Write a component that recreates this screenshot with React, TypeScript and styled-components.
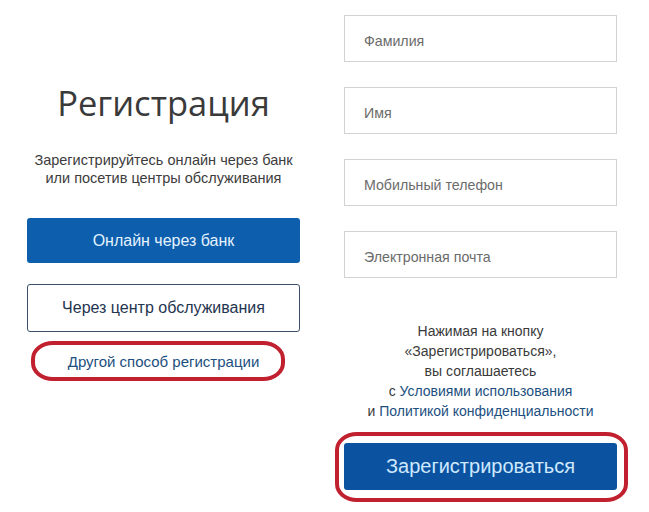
import styled, { createGlobalStyle } from 'styled-components';

const GlobalStyle = createGlobalStyle`
	html, body {
		margin: 0;
		padding: 0;
		background: #fff;
	}
	body {
		font-family: 'Liberation Sans', Arial, sans-serif;
		color: #333;
	}
`;

const Page = styled.div`
	display: flex;
	align-items: flex-start;
	gap: 44px;
	padding: 15px 0 0 27px;
	width: 649px;
	height: 512px;
	box-sizing: border-box;
`;

const Column = styled.div`
	width: 273px;
	display: flex;
	flex-direction: column;
	align-items: center;
`;

const Title = styled.h1`
	margin: 65px 0 0;
	font-family: 'Open Sans', sans-serif;
	font-weight: 400;
	font-size: 34.5px;
	line-height: 46px;
	color: #3a3a3a;
`;

const Lead = styled.p`
	margin: 25px 0 0;
	font-size: 14.5px;
	line-height: 18px;
	text-align: center;
	color: #3c3c3c;
`;

const Button = styled.button<{ $outline?: boolean; $big?: boolean }>`
	width: 273px;
	height: ${(p) => (p.$big ? '47px' : p.$outline ? '48px' : '45px')};
	border-radius: 3px;
	border: 1px solid ${(p) => (p.$outline ? '#3b5068' : 'transparent')};
	background: ${(p) => (p.$outline ? '#fff' : p.$big ? '#0b53a0' : '#0d5ead')};
	color: ${(p) => (p.$outline ? '#1f3550' : p.$big ? '#cfe9ff' : '#e4f2ff')};
	font-family: 'Liberation Sans', Arial, sans-serif;
	font-size: ${(p) => (p.$big ? '20px' : '16px')};
	cursor: pointer;
	padding: 0;
`;

const BankButton = styled(Button)`
	margin-top: 31px;
`;

const CenterButton = styled(Button)`
	margin-top: 21px;
`;

const Marked = styled.div<{ $w: number; $h: number; $dx: number; $dy: number }>`
	position: relative;

	&::after {
		content: '';
		position: absolute;
		left: ${(p) => p.$dx}px;
		top: ${(p) => p.$dy}px;
		width: ${(p) => p.$w}px;
		height: ${(p) => p.$h}px;
		border: 4px solid #c1202e;
		border-radius: 22px / 18px;
		box-sizing: border-box;
		pointer-events: none;
	}
`;

const OtherWay = styled(Marked)`
	margin-top: 21px;
`;

const Link = styled.a<{ $size?: number }>`
	color: #1d4f80;
	text-decoration: none;
	font-size: ${(p) => p.$size ?? 14}px;
	line-height: 18px;
`;

const Field = styled.input`
	width: 273px;
	height: 47px;
	box-sizing: border-box;
	border: 1px solid #d2d2d2;
	padding: 4px 19px 0;
	margin-bottom: 25px;
	font-family: 'Liberation Sans', Arial, sans-serif;
	font-size: 14.2px;
	color: #333;
	outline: none;

	&::placeholder {
		color: #6b6b6b;
	}
`;

const Agreement = styled.p`
	margin: 18px 0 0;
	font-size: 14px;
	line-height: 20px;
	text-align: center;
	color: #3a3a3a;
`;

const Register = styled(Marked)`
	margin-top: 22px;
`;

const App = () => {
	return (
		<>
			<GlobalStyle />
			<Page>
				<Column>
					<Title>Регистрация</Title>
					<Lead>
						Зарегистрируйтесь онлайн через банк
						<br />
						или посетив центры обслуживания
					</Lead>
					<BankButton>Онлайн через банк</BankButton>
					<CenterButton $outline>Через центр обслуживания</CenterButton>
					<OtherWay $w={254} $h={40} $dx={-37} $dy={-12}>
						<Link href='#' $size={15}>Другой способ регистрации</Link>
					</OtherWay>
				</Column>
				<Column>
					<Field type='text' placeholder='Фамилия' />
					<Field type='text' placeholder='Имя' />
					<Field type='tel' placeholder='Мобильный телефон' />
					<Field type='email' placeholder='Электронная почта' />
					<Agreement>
						Нажимая на кнопку
						<br />
						«Зарегистрироваться»,
						<br />
						вы соглашаетесь
						<br />
						с <Link href='#'>Условиями использования</Link>
						<br />
						и <Link href='#'>Политикой конфиденциальности</Link>
					</Agreement>
					<Register $w={293} $h={70} $dx={-9} $dy={-11}>
						<Button $big>Зарегистрироваться</Button>
					</Register>
				</Column>
			</Page>
		</>
	);
};

export default App;
